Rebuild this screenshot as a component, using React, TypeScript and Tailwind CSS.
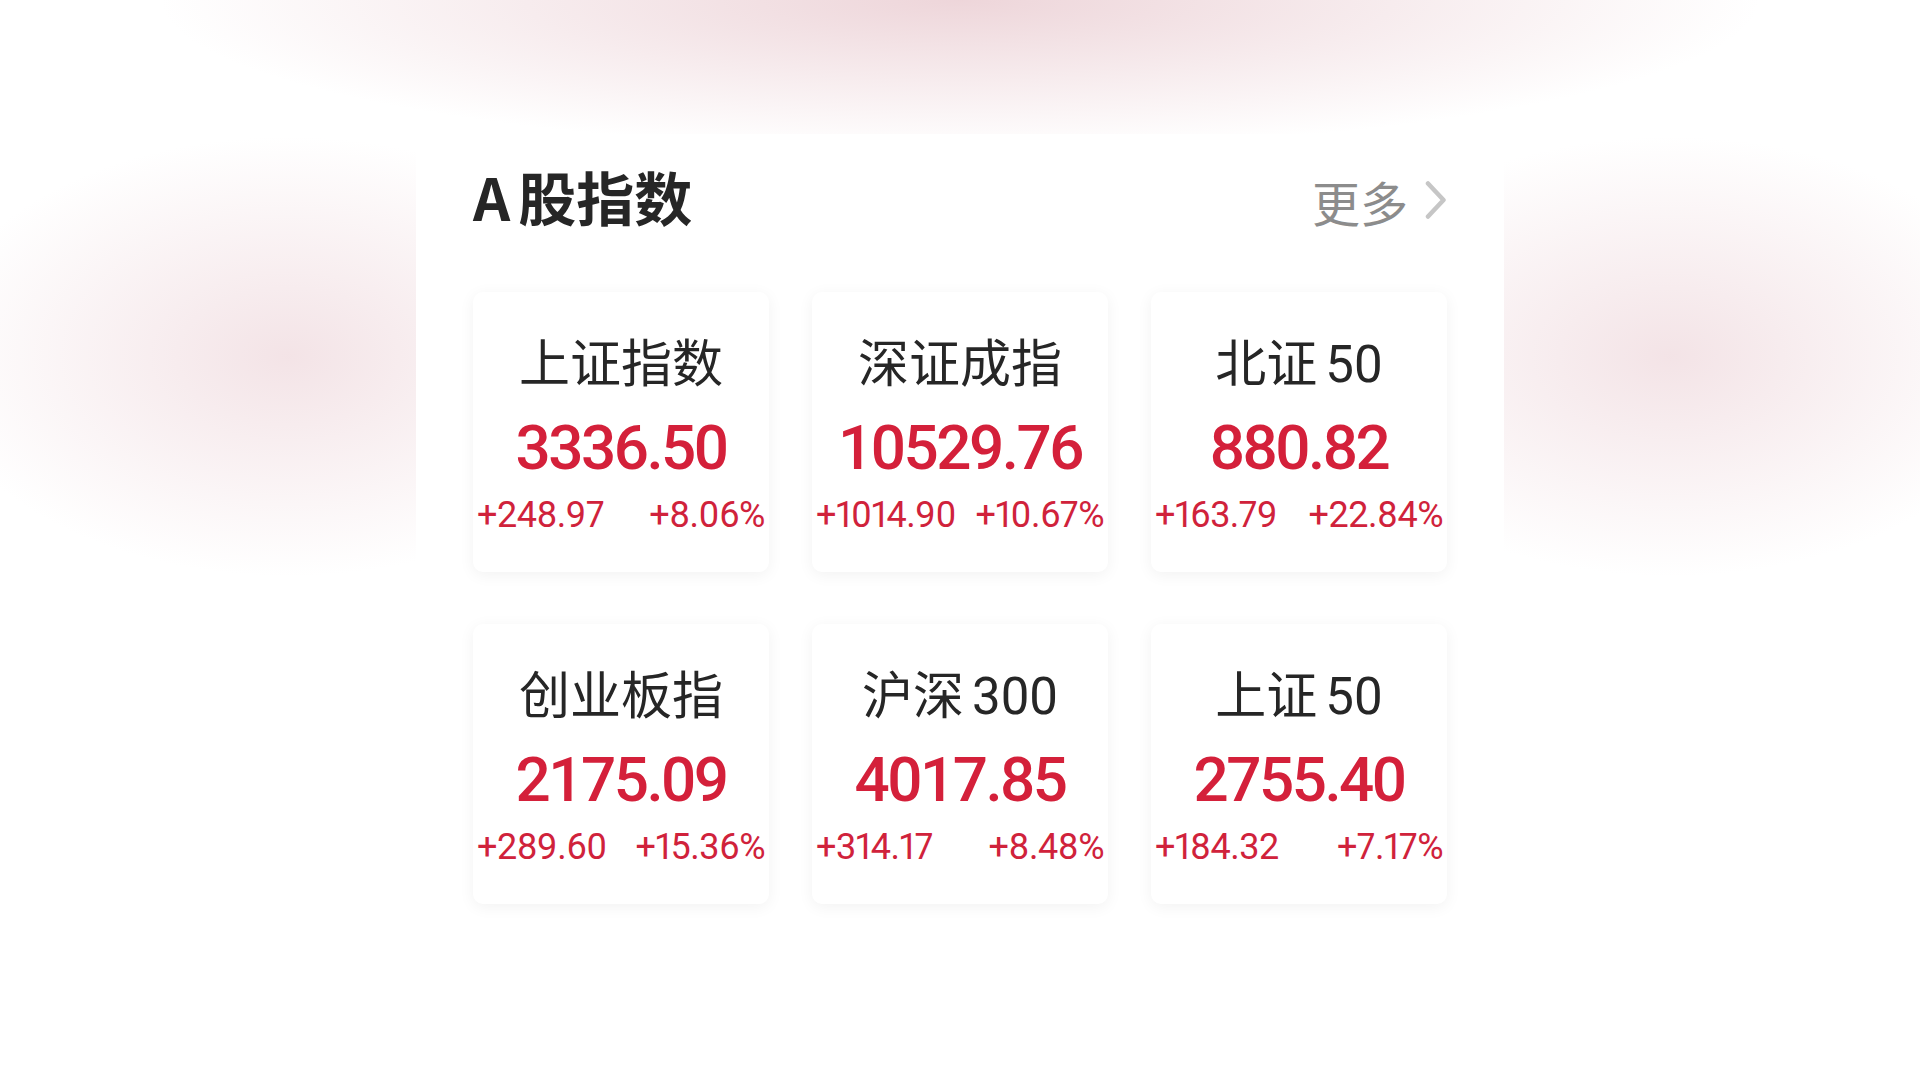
const indices = [
  { name: "上证指数", value: "3336.50", change: "+248.97", pct: "+8.06%" },
  { name: "深证成指", value: "10529.76", change: "+1014.90", pct: "+10.67%" },
  { name: "北证", num: "50", value: "880.82", change: "+163.79", pct: "+22.84%" },
  { name: "创业板指", value: "2175.09", change: "+289.60", pct: "+15.36%" },
  { name: "沪深", num: "300", value: "4017.85", change: "+314.17", pct: "+8.48%" },
  { name: "上证", num: "50", value: "2755.40", change: "+184.32", pct: "+7.17%" },
];

type Index = (typeof indices)[number];

function IndexCard({ item }: { item: Index }) {
  return (
    <div className="flex h-[280px] flex-col items-center rounded-[10px] bg-white px-[4px] pt-[47px] shadow-[0_3px_16px_rgba(0,0,0,0.055)]">
      <div className="whitespace-nowrap font-['Roboto','Noto_Sans_CJK_SC',sans-serif] text-[51px] leading-none text-[#262626]">
        {item.name}
        {item.num && <span className="ml-[8px]">{item.num}</span>}
      </div>
      <div className="mt-[27px] whitespace-nowrap font-['Roboto',sans-serif] text-[62px] font-medium leading-none tracking-[-2.5px] text-[#d4203a]">
        {item.value}
      </div>
      <div className="mt-[18px] flex w-full justify-between whitespace-nowrap font-['Roboto',sans-serif] text-[36px] leading-none tracking-[-0.5px] text-[#d0223b] proportional-nums">
        <span>{item.change}</span>
        <span>{item.pct}</span>
      </div>
    </div>
  );
}

export default function App() {
  return (
    <div className="flex min-h-screen w-full justify-center bg-white bg-[radial-gradient(ellipse_800px_150px_at_50%_0%,rgba(226,186,193,0.6),transparent),radial-gradient(ellipse_360px_220px_at_15%_33%,rgba(232,200,206,0.5),transparent),radial-gradient(ellipse_360px_220px_at_87%_33%,rgba(232,200,206,0.5),transparent)] pt-[134px]">
      <div className="flex h-[809px] w-[1088px] flex-col bg-white px-[57px] pt-[33px]">
        {/* Header */}
        <div className="flex items-end justify-between">
          <h2 className="font-['Noto_Sans_CJK_SC',sans-serif] text-[58px] font-bold leading-none text-[#262626]">
            <span className="mr-[8px]">A</span>股指数
          </h2>
          <div className="flex items-center">
            <span className="font-['Noto_Sans_CJK_SC',sans-serif] text-[48px] leading-none text-[#8c8c8c]">
              更多
            </span>
            <svg width="22" height="38" viewBox="0 0 22 38" fill="none" className="ml-[17px] mb-[2px]">
              <path
                d="M3 2.5L18.5 19L3 35.5"
                stroke="#c6c6c6"
                strokeWidth="4.5"
                strokeLinecap="round"
                strokeLinejoin="round"
              />
            </svg>
          </div>
        </div>

        {/* Cards */}
        <div className="mt-[67px] grid grid-cols-3 gap-x-[43px] gap-y-[52px]">
          {indices.map((item) => (
            <IndexCard key={item.name + (item.num ?? "")} item={item} />
          ))}
        </div>
      </div>
    </div>
  );
}
